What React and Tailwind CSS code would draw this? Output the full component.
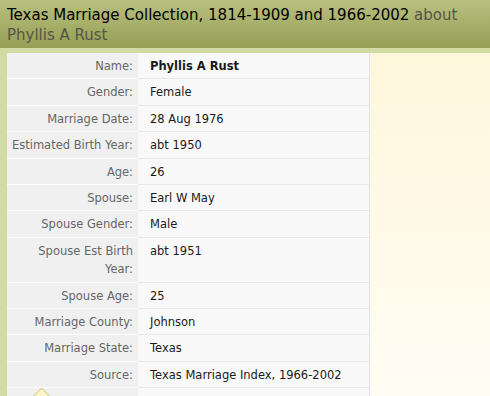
import React from "react";

const rows = [
  ["Name:", "Phyllis A Rust", true],
  ["Gender:", "Female"],
  ["Marriage Date:", "28 Aug 1976"],
  ["Estimated Birth Year:", "abt 1950"],
  ["Age:", "26"],
  ["Spouse:", "Earl W May"],
  ["Spouse Gender:", "Male"],
  ["Spouse Est Birth Year:", "abt 1951"],
  ["Spouse Age:", "25"],
  ["Marriage County:", "Johnson"],
  ["Marriage State:", "Texas"],
  ["Source:", "Texas Marriage Index, 1966-2002"],
];

export default function App() {
  return (
    <div
      className="w-[490px] h-[396px] overflow-hidden flex flex-col"
      style={{ fontFamily: '"DejaVu Sans", Tahoma, Verdana, sans-serif' }}
    >
      <div className="h-[48px] shrink-0 bg-gradient-to-b from-[#b9c07f] to-[#959f54] px-[7px] pt-[5px] text-[15px] leading-[20px] text-black">
        <div className="whitespace-nowrap">
          Texas Marriage Collection, 1814-1909 and 1966-2002{" "}
          <span className="text-[#545448]">about</span>
        </div>
        <div className="text-[#545448]">Phyllis A Rust</div>
      </div>
      <div className="flex-1 bg-[#d3dba5] pt-[5px] pl-[7px] flex">
        <div className="flex-1 flex bg-gradient-to-b from-[#fff7dc] to-[#fffcf4]">
          <div className="w-[363px] border-r border-[#e2e2e2] text-[11.5px] relative">
            {rows.map(([label, value, bold]) => (
              <div key={label} className="flex border-b border-[#e8e8e8]">
                <div className="w-[131px] shrink-0 bg-[#f0f0f0] text-right text-[#666666] pt-[4px] pb-[3px] pr-[5px] pl-[4px] leading-[18.4px] border-b border-white -mb-px">
                  {label}
                </div>
                <div
                  className={
                    "flex-1 bg-[#f9f9f9] pl-[12px] pt-[4px] pb-[3px] leading-[18.4px] text-[#1a1a1a] " +
                    (bold ? "font-bold" : "")
                  }
                >
                  {value}
                </div>
              </div>
            ))}
            <div className="flex h-[20px]">
              <div className="w-[131px] shrink-0 bg-[#f0f0f0]" />
              <div className="flex-1 bg-[#f9f9f9]" />
            </div>
            <div className="absolute left-[26px] top-[338px] w-[17px] h-[17px] rotate-45 bg-[#fdf6c6] border border-[#d9cf8a]" />
          </div>
        </div>
      </div>
    </div>
  );
}
